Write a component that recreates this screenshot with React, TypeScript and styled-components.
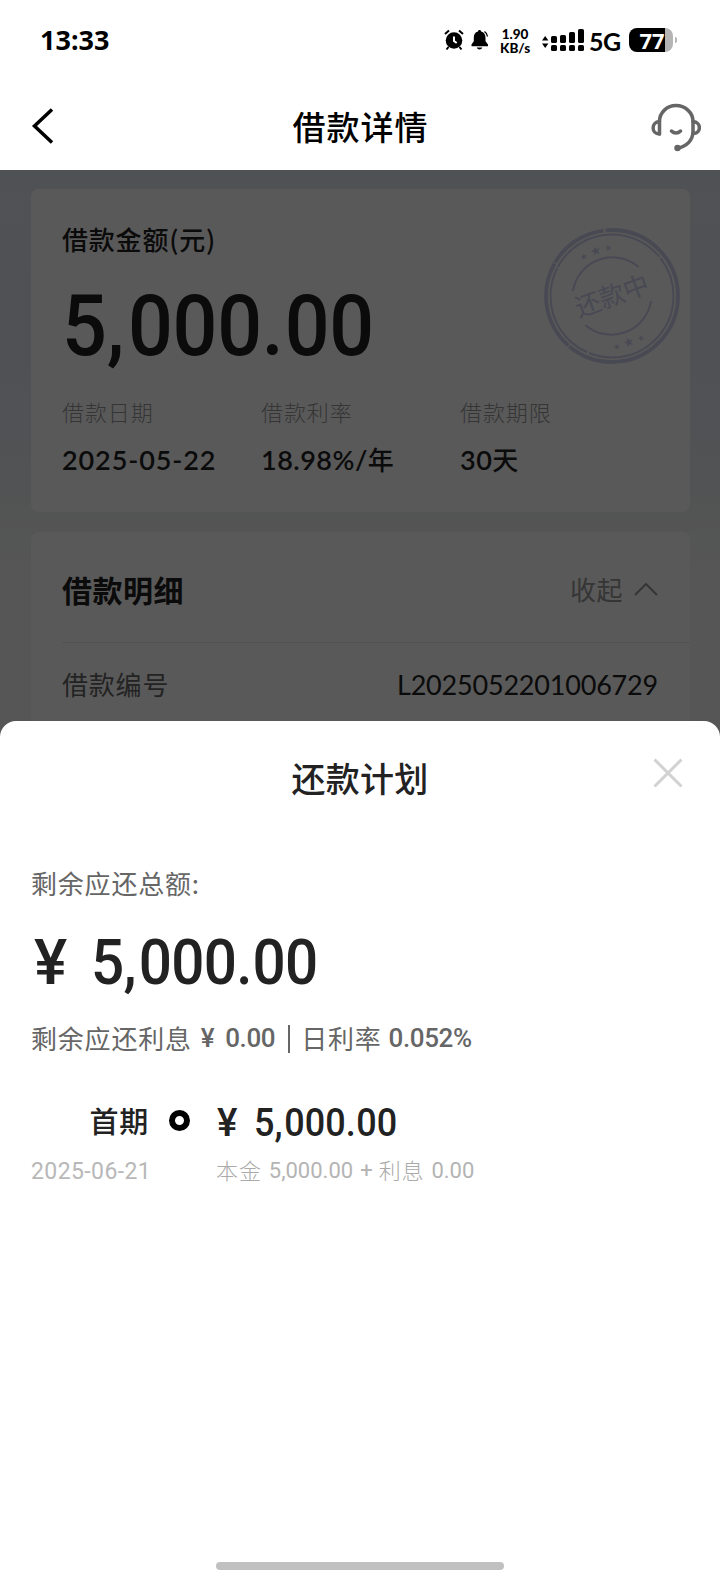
import React from "react";
import styled, { createGlobalStyle } from "styled-components";

const Global = createGlobalStyle`
  body { margin: 0; background: #fff; }
  * { box-sizing: border-box; }
`;

const uiFont = `Lato, "Noto Sans CJK SC", sans-serif`;
const cjkFont = `"Noto Sans CJK SC", sans-serif`;
const numberFont = `Roboto, "Noto Sans CJK SC", sans-serif`;

const Screen = styled.div`
  position: relative;
  width: 720px;
  height: 1584px;
  overflow: hidden;
  background: #fff;
  font-family: ${uiFont};
  white-space: nowrap;
`;

const StatusBar = styled.div`
  height: 80px;
  padding: 0 43px 0 40px;
  display: flex;
  align-items: center;
  color: #000;
`;

const Clock = styled.div`
  flex: 1;
  font: 700 27px/30px "Noto Sans", sans-serif;
  letter-spacing: 0;
`;

const StatusIcons = styled.div`
  display: flex;
  align-items: center;
`;

const NetSpeed = styled.div`
  width: 30px;
  margin: 1px 12px 0 11px;
  text-align: center;
  font: 900 13.5px/14px Lato, sans-serif;
`;

const NetType = styled.div`
  width: 32px;
  margin: 2px 8px 0 5px;
  font: 700 25px/30px Lato, sans-serif;
  letter-spacing: -0.6px;
`;

const Battery = styled.div`
  display: flex;
  align-items: center;
  justify-content: center;
  width: 44px;
  height: 24px;
  padding-left: 2px;
  border-radius: 8px;
  background: linear-gradient(90deg, #000 0 36px, #b4b4b4 36px);
  color: #fff;
  font: 700 22px/24px "Noto Sans", sans-serif;
`;

const BatteryTip = styled.div`
  width: 2px;
  height: 6px;
  margin-left: 2px;
  border-radius: 0 2px 2px 0;
  background: #b4b4b4;
`;

const NavBar = styled.div`
  display: grid;
  grid-template-columns: 100px 1fr 100px;
  align-items: center;
  height: 90px;
`;

const BackIcon = styled.svg`
  margin-left: 30px;
  margin-top: 2px;
`;

const SupportIcon = styled.svg`
  justify-self: end;
  margin: 5px 19px 0 0;
`;

const NavTitle = styled.h1`
  margin: 2px 0 0 1px;
  text-align: center;
  font: 500 33px/44px ${cjkFont};
  letter-spacing: 1px;
`;

const Scene = styled.div`
  position: relative;
  display: flex;
  flex-direction: column;
  gap: 20px;
  height: 1414px;
  padding: 19px 30px 0 31px;
  background: linear-gradient(180deg, #e3eaef 0, #e5e9f2 100px, #e6e9f3 200px, #ebeef0 320px, #f4f5f4 400px);
  &::after {
    content: "";
    position: absolute;
    inset: 0;
    background: rgba(0, 0, 0, 0.65);
  }
`;

const Card = styled.section`
  position: relative;
  border-radius: 8px;
  background: #fff;
  padding-left: 31px;
`;

const SummaryCard = styled(Card)`
  height: 323px;
  padding-top: 32px;
`;

const DetailCard = styled(Card)`
  flex: 1;
`;

const AmountLabel = styled.div`
  font: 500 26px/36px ${cjkFont};
  letter-spacing: 0.8px;
  color: #222;
`;

/* Figures are set in a slightly condensed cut with roomy punctuation. */
const Condensed = styled.span`
  display: inline-block;
  transform: scaleX(0.935);
  transform-origin: left center;
`;

const Mark = styled.span<{ $space: number }>`
  margin-right: ${(p) => p.$space}em;
`;

const Amount = styled.div`
  margin-top: 25px;
  font: 500 84.5px/90px ${numberFont};
  letter-spacing: -0.3px;
  color: #222;
`;

const Facts = styled.div`
  display: grid;
  grid-template-columns: 199px 199px 1fr;
  margin-top: 24px;
`;

const FactLabel = styled.div`
  font: 300 22px/30px ${cjkFont};
  letter-spacing: 0.9px;
  color: #999;
`;

const FactValue = styled.div<{ $spacing?: number }>`
  display: flex;
  margin-top: 18px;
  font: 600 27px/32px ${uiFont};
  letter-spacing: ${(p) => p.$spacing ?? 0.5}px;
  color: #222;
`;

const Unit = styled.span`
  font: 500 26px/30px ${cjkFont};
`;

const Stamp = styled.svg`
  position: absolute;
  left: 511px;
  top: 37px;
`;

const DetailHeader = styled.div`
  display: flex;
  justify-content: space-between;
  align-items: center;
  height: 111px;
  padding: 4px 32px 0 0;
  border-bottom: 1px solid #eaeaea;
`;

const DetailTitle = styled.h2`
  margin: 0;
  font: 700 30px/40px ${cjkFont};
  letter-spacing: 0.5px;
  color: #222;
`;

const Collapse = styled.div`
  display: flex;
  align-items: center;
  gap: 11px;
  font: 400 26px/36px ${cjkFont};
  letter-spacing: 0.5px;
  color: #999;
`;

const DetailRow = styled.div`
  display: flex;
  justify-content: space-between;
  align-items: center;
  height: 84px;
  padding-right: 32px;
  color: #222;
  font: 400 27px/36px ${uiFont};
  letter-spacing: -0.2px;
`;

const DetailKey = styled.span`
  margin-bottom: 2px;
  font: 400 26px/34px ${cjkFont};
  letter-spacing: 0.8px;
  color: #666;
`;

const Sheet = styled.div`
  position: absolute;
  inset: 721px 0 0;
  display: flex;
  flex-direction: column;
  border-radius: 16px 16px 0 0;
  background: #fff;
`;

const SheetHeader = styled.div`
  display: grid;
  grid-template-columns: 100px 1fr 100px;
  height: 113px;
`;

const SheetTitle = styled.h2`
  grid-column: 2;
  margin: 35px 0 0;
  text-align: center;
  font: 500 34px/44px ${cjkFont};
  letter-spacing: 0.3px;
  color: #222;
`;

const CloseIcon = styled.svg`
  margin: 37px 0 0 33px;
`;

const SheetBody = styled.div`
  flex: 1;
  padding-left: 31px;
`;

const RemainLabel = styled.div`
  margin-top: 31px;
  font: 400 26px/36px ${cjkFont};
  letter-spacing: 0.8px;
  color: #666;
`;

const RemainAmount = styled.div`
  display: flex;
  gap: 25px;
  margin: 24px 0 0 3px;
  font: 500 62.5px/76px ${numberFont};
  letter-spacing: -0.8px;
  color: #222;
`;

const InterestLine = styled.div`
  display: flex;
  margin-top: 19px;
  font: 400 26px/36px ${cjkFont};
  letter-spacing: 0.8px;
  color: #666;
`;

const Figure = styled.span<{ $left: number }>`
  margin: 0 0 0 ${(p) => p.$left}px;
  font-family: ${numberFont};
  font-weight: 500;
  letter-spacing: -0.4px;
`;

const Separator = styled.span`
  width: 2px;
  height: 28px;
  margin: 5px 11px 0 13px;
  background: #666;
`;

const Plan = styled.div`
  display: grid;
  grid-template-columns: 118px 60px 1fr;
  margin-top: 44px;
`;

const Term = styled.div`
  text-align: right;
  font: 500 29px/40px ${cjkFont};
  letter-spacing: 0.8px;
  color: #222;
`;

const Node = styled.div`
  width: 21px;
  height: 21px;
  margin: 10px auto 0 20px;
  border: 6px solid #000;
  border-radius: 50%;
`;

const TermAmount = styled.div`
  display: flex;
  gap: 17px;
  margin: 3px 0 0 8px;
  font: 500 38.5px/40px ${numberFont};
  letter-spacing: 0;
  color: #222;
`;

const TermDate = styled.div`
  grid-column: 1 / 3;
  margin-top: 13px;
  font: 400 23px/32px ${numberFont};
  letter-spacing: 0.4px;
  color: #b8b8b8;
`;

const Breakdown = styled.div`
  display: flex;
  margin: 10px 0 0 7px;
  font: 300 22px/32px ${cjkFont};
  letter-spacing: 0.9px;
  color: #aaa;
`;

const SmallFigure = styled.span<{ $left: number }>`
  margin: 2px 0 0 ${(p) => p.$left}px;
  font-family: ${numberFont};
  font-weight: 400;
  letter-spacing: 0;
  color: #b4b4b4;
`;

const HomeIndicator = styled.div`
  width: 288px;
  height: 8px;
  margin: 0 auto 14px;
  border-radius: 4px;
  background: #c0c0c0;
`;

function Money() {
  return (
    <Condensed>
      5<Mark $space={0.05}>,</Mark>000<Mark $space={0.015}>.</Mark>00
    </Condensed>
  );
}

function AlarmIcon() {
  return (
    <svg width="20" height="22" viewBox="0 0 20 22">
      <circle cx="10" cy="11.5" r="8.3" />
      <path d="M1 5 5 1.5M19 5 15 1.5M4.5 18 2.5 20.5M15.500 18l2 2.500" fill="none" stroke="#000" strokeWidth="2" />
      <path d="M10 7.500v4.500l2.700 2" fill="none" stroke="#fff" strokeWidth="2" />
    </svg>
  );
}

const BellSvg = styled.svg`
  margin-left: 7px;
`;

function BellIcon() {
  return (
    <BellSvg width="18" height="22" viewBox="0 0 18 22">
      <path d="M8.500 1c1 0 1.600.6 1.600 1.500 3 .8 4.400 3 4.400 6v3.800l2.500 3.200v1.700H.5v-1.700l2.300-3.200V8.500c0-3 1.200-5.200 4.200-6C7 1.600 7.500 1 8.500 1zM5.800 18.500h5.500c-.6 2.600-4.900 2.600-5.500 0z" />
      <path d="M13.500 2.500c1.800 1.200 2.800 2.800 3 5" fill="none" stroke="#000" strokeWidth="1.400" />
    </BellSvg>
  );
}

const signalHeights = [7, 8, 11, 14];

function SignalIcon() {
  return (
    <svg width="42" height="24" viewBox="0 0 42 24">
      <path d="M0 12.500 3.200 8l3.200 4.500zM0 15.500h6.400L3.200 20z" />
      {signalHeights.map((h, i) => (
        <g key={h}>
          <rect x={9 + i * 9} y={15 - h} width="6" height={h} rx="1.600" />
          <rect x={9 + i * 9} y="17" width="6" height="6" rx="1.600" />
        </g>
      ))}
    </svg>
  );
}

function StampMark() {
  return (
    <Stamp width="140" height="140" viewBox="-70 -70 140 140" fill="none" stroke="#d0d0f0">
      <circle r="66" strokeWidth="3.800" strokeDasharray="150 1 90 1 60 2 111 0" />
      <circle r="61.500" strokeWidth="2" strokeDasharray="120 2 100 1" />
      <g transform="rotate(-20)">
        <path d="M-35-18A40 40 0 0 1 35-18M-35 18A40 40 0 0 0 35 18" strokeWidth="2" />
        <g fill="#d0d0f0" stroke="none" textAnchor="middle" fontFamily="DejaVu Sans">
          <text y="-44" fontSize="12">★</text>
          <text x="-13" y="-44" fontSize="8">★</text>
          <text x="13" y="-44" fontSize="8">★</text>
          <text y="53" fontSize="12">★</text>
          <text x="-13" y="52" fontSize="8">★</text>
          <text x="13" y="52" fontSize="8">★</text>
          <text y="9" fontSize="25.500" fontWeight="400" fontFamily="Noto Sans CJK SC">还款中</text>
        </g>
      </g>
    </Stamp>
  );
}

export default function App() {
  return (
    <Screen>
      <Global />
      <StatusBar>
        <Clock>13:33</Clock>
        <StatusIcons>
          <AlarmIcon />
          <BellIcon />
          <NetSpeed>
            <div>1.90</div>
            <div>KB/s</div>
          </NetSpeed>
          <SignalIcon />
          <NetType>5G</NetType>
          <Battery>77</Battery>
          <BatteryTip />
        </StatusIcons>
      </StatusBar>
      <NavBar>
        <BackIcon width="26" height="38" viewBox="0 0 26 38" fill="none" stroke="#000" strokeWidth="3.500">
          <path d="M22 2.500 4.500 19 22 35.500" />
        </BackIcon>
        <NavTitle>借款详情</NavTitle>
        <SupportIcon width="50" height="50" viewBox="0 0 50 50" fill="none" stroke="#666" strokeWidth="3.500" strokeLinecap="round" strokeLinejoin="round">
          <path d="M8.500 31V18.500C8.500 9.500 16 2.500 25 2.500s17 7 17 16V28c0 9-6 15.500-15.500 17" />
          <path d="M8.500 18.500c-8.500.5-8.500 12.500 0 12.500M42 18.500c8.500.5 8.500 12 0 12M20.500 28c2.500 2.700 6.500 2.700 9 0" />
          <circle cx="26.500" cy="45" r="1.500" />
        </SupportIcon>
      </NavBar>
      <Scene>
        <SummaryCard>
          <AmountLabel>借款金额(元)</AmountLabel>
          <Amount>
            <Money />
          </Amount>
          <Facts>
            <div>
              <FactLabel>借款日期</FactLabel>
              <FactValue $spacing={0.9}>2025-05-22</FactValue>
            </div>
            <div>
              <FactLabel>借款利率</FactLabel>
              <FactValue>
                18.98%/<Unit>年</Unit>
              </FactValue>
            </div>
            <div>
              <FactLabel>借款期限</FactLabel>
              <FactValue>
                30<Unit>天</Unit>
              </FactValue>
            </div>
          </Facts>
          <StampMark />
        </SummaryCard>
        <DetailCard>
          <DetailHeader>
            <DetailTitle>借款明细</DetailTitle>
            <Collapse>
              收起
              <svg width="24" height="14" viewBox="0 0 24 14" fill="none" stroke="#999" strokeWidth="2">
                <path d="M1 13 12 2l11 11" />
              </svg>
            </Collapse>
          </DetailHeader>
          <DetailRow>
            <DetailKey>借款编号</DetailKey>
            <span>L2025052201006729</span>
          </DetailRow>
        </DetailCard>
      </Scene>
      <Sheet>
        <SheetHeader>
          <SheetTitle>还款计划</SheetTitle>
          <CloseIcon width="30" height="30" viewBox="0 0 30 30" stroke="#d2d2d2" strokeWidth="3">
            <path d="M1.500 1.500 28.500 28.500M28.500 1.500 1.500 28.500" />
          </CloseIcon>
        </SheetHeader>
        <SheetBody>
          <RemainLabel>剩余应还总额:</RemainLabel>
          <RemainAmount>
            <span>¥</span>
            <Money />
          </RemainAmount>
          <InterestLine>
            剩余应还利息
            <Figure $left={9}>¥</Figure>
            <Figure $left={11}>0.00</Figure>
            <Separator />
            日利率
            <Figure $left={7}>0.052%</Figure>
          </InterestLine>
          <Plan>
            <Term>首期</Term>
            <Node />
            <TermAmount>
              <span>¥</span>
              <Money />
            </TermAmount>
            <TermDate>2025-06-21</TermDate>
            <Breakdown>
              本金
              <SmallFigure $left={7}>5,000.00</SmallFigure>
              <SmallFigure $left={7}>+</SmallFigure>
              <SmallFigure $left={6} />
              利息
              <SmallFigure $left={7}>0.00</SmallFigure>
            </Breakdown>
          </Plan>
        </SheetBody>
        <HomeIndicator />
      </Sheet>
    </Screen>
  );
}
